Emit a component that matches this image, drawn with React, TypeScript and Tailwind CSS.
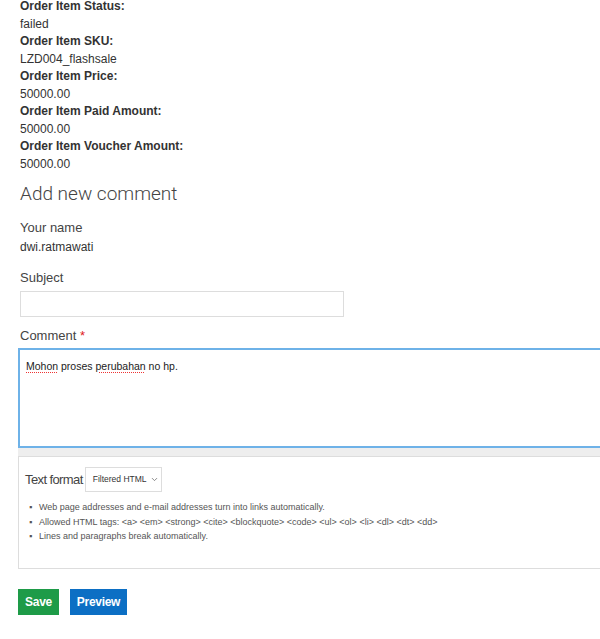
import { ChevronDown } from "lucide-react";

const fields = [
  { label: "Order Item Status:", value: "failed" },
  { label: "Order Item SKU:", value: "LZD004_flashsale" },
  { label: "Order Item Price:", value: "50000.00" },
  { label: "Order Item Paid Amount:", value: "50000.00" },
  { label: "Order Item Voucher Amount:", value: "50000.00" },
];

const tips = [
  "Web page addresses and e-mail addresses turn into links automatically.",
  "Allowed HTML tags: <a> <em> <strong> <cite> <blockquote> <code> <ul> <ol> <li> <dl> <dt> <dd>",
  "Lines and paragraphs break automatically.",
];

export default function App() {
  return (
    <div className="w-[600px] h-[639px] overflow-hidden bg-white text-[#333] font-['Liberation_Sans',Arial,sans-serif]">
      <div className="pl-5 -mt-[2px]">
        {fields.map((f) => (
          <div key={f.label} className="text-[12px] leading-[17.5px]">
            <div className="font-bold">{f.label}</div>
            <div>{f.value}</div>
          </div>
        ))}
      </div>

      <h2 className="pl-5 mt-[9px] text-[19px] leading-[24px] font-light text-[#444] font-['Roboto','Liberation_Sans',sans-serif]">
        Add new comment
      </h2>

      <div className="pl-5 mt-[13px]">
        <div className="text-[13px] leading-[18px] text-[#444]">Your name</div>
        <div className="text-[12px] leading-[18px] mt-[1px]">dwi.ratmawati</div>
      </div>

      <div className="pl-5 mt-[13px]">
        <div className="text-[13px] leading-[18px] text-[#444]">Subject</div>
        <input
          type="text"
          className="mt-[4px] block w-[324px] h-[26px] border border-[#ddd] outline-none"
        />
      </div>

      <div className="pl-[18px] mt-[10px]">
        <div className="pl-[2px] text-[13px] leading-[18px] text-[#444]">
          Comment <span className="text-[#e01b1b]">*</span>
        </div>
        <div className="mt-[3px] w-[600px]">
          <div className="h-[100px] border-2 border-[#6eb2e8] bg-white px-[6px] pt-[8px] text-[10.5px] leading-[16px] text-[#222]">
            <span className="underline decoration-dotted decoration-[#e33] underline-offset-2 decoration-1">Mohon</span>{" "}
            proses{" "}
            <span className="underline decoration-dotted decoration-[#e33] underline-offset-2 decoration-1">perubahan</span>{" "}
            no hp.
          </div>
          <div className="h-[9px] bg-[#eee] border-b border-[#ddd] flex justify-end">
            <div className="w-[12px] h-[6px] mt-[1px] bg-[#d4d4d4]" />
          </div>
          <div className="h-[112px] border border-[#ddd] border-t-0 px-[6px] pt-[10px]">
            <div className="flex items-center gap-[2px]">
              <span className="text-[13px] tracking-[-0.6px] text-[#444]">Text format</span>
              <div className="flex items-center gap-[3px] h-[25px] w-[77px] pl-[7px] border border-[#ddd] text-[8.5px] text-[#333] whitespace-nowrap">
                Filtered HTML
                <ChevronDown size={9} strokeWidth={2} className="text-[#666]" />
              </div>
            </div>
            <ul className="mt-[8px] text-[9px] leading-[14.5px] text-[#555]">
              {tips.map((t) => (
                <li key={t} className="flex items-start">
                  <span className="w-[14px] shrink-0 pl-[4px]">▪</span>
                  {t}
                </li>
              ))}
            </ul>
          </div>
        </div>
      </div>

      <div className="pl-[18px] mt-[20px] flex gap-[11px]">
        <button className="h-[26px] w-[41px] bg-[#1e9b48] text-white text-[12px] font-bold tracking-[-0.3px]">Save</button>
        <button className="h-[26px] w-[57px] bg-[#0c6fc4] text-white text-[12px] font-bold tracking-[-0.3px]">Preview</button>
      </div>
    </div>
  );
}
